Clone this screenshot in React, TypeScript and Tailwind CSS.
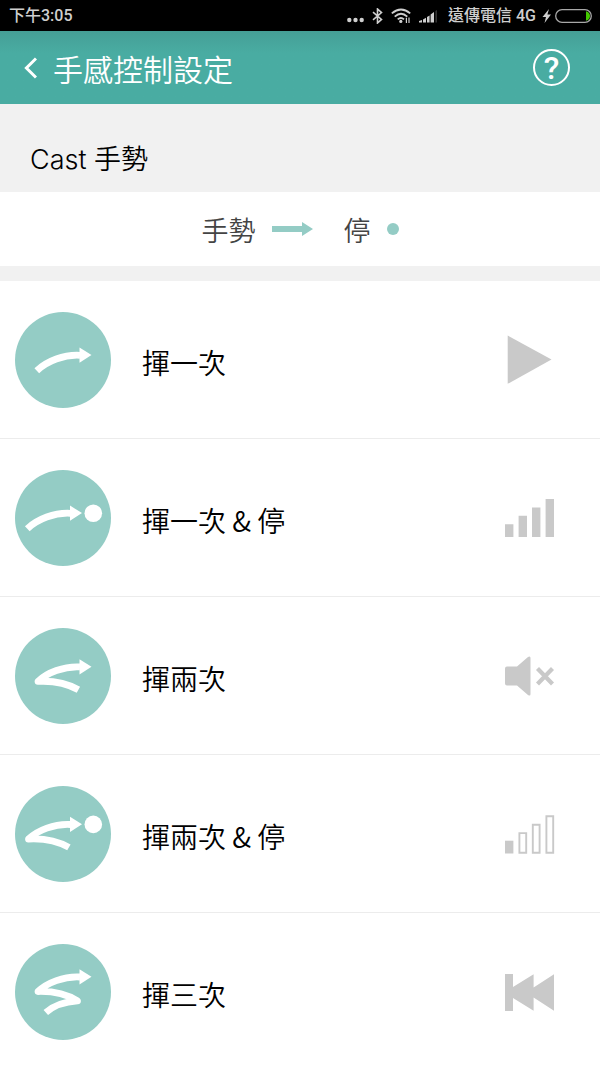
import React from 'react'

type IconName = 'play' | 'volume' | 'mute' | 'volumeLow' | 'previous'
type GestureName = 'once' | 'onceStop' | 'twice' | 'twiceStop' | 'thrice'

interface Gesture {
  name: GestureName
  label: string
  icon: IconName
}

const gestures: Gesture[] = [
  { name: 'once', label: '揮一次', icon: 'play' },
  { name: 'onceStop', label: '揮一次 & 停', icon: 'volume' },
  { name: 'twice', label: '揮兩次', icon: 'mute' },
  { name: 'twiceStop', label: '揮兩次 & 停', icon: 'volumeLow' },
  { name: 'thrice', label: '揮三次', icon: 'previous' },
]

// Swing path with an arrow head, drawn for the top stroke at y = 43
const swings = {
  once: 'M21.8 58.7C32 49 49 42.4 65 43.3',
  twice: 'M63.4 66.2C50 58.6 38 57 23 57.8C32 49 49 42.4 65 43.3',
  thrice: 'M30.8 78.8C39 71.5 50 68 62.5 67.2C52 60.6 38 57.4 23 57.8C32 49 49 42.4 65 43.3',
}

function Swing({ d, x = 0, y = 0, stop = false }: { d: string; x?: number; y?: number; stop?: boolean }) {
  return (
    <g transform={`translate(${x} ${y})`}>
      <path d={d} fill="none" stroke="#fff" strokeWidth="6.8" strokeLinejoin="round" />
      <path d="M64.5 35.6L76.5 43.1L64.5 50.8Z" fill="#fff" />
      {stop && <circle cx="87.8" cy="43.2" r="8.8" fill="#fff" />}
    </g>
  )
}

function GestureIcon({ name }: { name: GestureName }) {
  return (
    <svg viewBox="0 0 96 96" className="h-24 w-24 shrink-0" aria-hidden="true">
      <circle cx="48" cy="48" r="48" fill="#94ccc5" />
      {name === 'once' && <Swing d={swings.once} />}
      {name === 'onceStop' && <Swing d={swings.once} x={-9.5} stop />}
      {name === 'twice' && <Swing d={swings.twice} y={-4.4} />}
      {name === 'twiceStop' && <Swing d={swings.twice} x={-9.5} y={-4.8} stop />}
      {name === 'thrice' && <Swing d={swings.thrice} y={-10.3} />}
    </svg>
  )
}

function ActionIcon({ name }: { name: IconName }) {
  return (
    <svg viewBox="0 0 50 50" className="h-[50px] w-[50px] shrink-0" fill="#c9c9c9" aria-hidden="true">
      {name === 'play' && <path d="M2.7 .5L46.5 24.5L2.7 48.8Z" />}
      {name === 'volume' && (
        <path d="M0 31.2h8.4V44H0zM13.6 22.8H22V44h-8.4zM27 14.4h8.4V44H27zM40.6 6H49v38h-8.4z" />
      )}
      {name === 'mute' && (
        <>
          <path d="M2 15.5H12L23 6Q25.5 4.5 25.5 7V43Q25.5 45.5 23 44L12 34.5H2Q0 34.5 0 32.5V17.5Q0 15.5 2 15.5Z" />
          <path d="M32.5 17.5L47.5 33M47.5 17.5L32.5 33" stroke="#c9c9c9" strokeWidth="4.2" />
        </>
      )}
      {name === 'volumeLow' && (
        <>
          <path d="M0 31.7h8.4V44.5H0z" />
          <path
            d="M14.4 24.1h6.8v19.6h-6.8zM27.8 15.7h6.8v28h-6.8zM41.4 7.3h6.8v36.4h-6.8z"
            fill="none"
            stroke="#c9c9c9"
            strokeWidth="1.9"
          />
        </>
      )}
      {name === 'previous' && <path d="M0 7H8V20L28.6 7.3V20.5L49 7.3V43.7L28.6 30.5V43.7L8 31V44H0Z" />}
    </svg>
  )
}

function StatusBar() {
  return (
    <div className="flex h-[31px] items-center justify-between bg-black pr-2 pl-[9px] font-['Roboto','Noto_Sans_CJK_TC',sans-serif] text-base leading-5 font-medium text-[#cfcfcf]">
      <span>下午3:05</span>
      <div className="flex items-center">
        <svg width="17" height="16" viewBox="0 0 17 16" fill="#cfcfcf" className="mr-2" aria-hidden="true">
          <circle cx="2.3" cy="12" r="2.2" />
          <circle cx="8.5" cy="12" r="2.2" />
          <circle cx="14.7" cy="12" r="2.2" />
        </svg>
        <svg width="11" height="16" viewBox="0 0 11 16" className="mr-2" aria-hidden="true">
          <path d="M1 4.2L9.5 11.4L5.5 15V1L9.5 4.6L1 11.8" fill="none" stroke="#cfcfcf" strokeWidth="1.6" />
        </svg>
        <svg width="20" height="16" viewBox="0 0 20 16" className="mr-2" aria-hidden="true">
          <path
            d="M.8 5.4Q10-2.4 19.2 5.4M3.7 8.6Q10 3 16.3 8.6M6.7 11.4Q10 8.6 13 11.4"
            fill="none"
            stroke="#cfcfcf"
            strokeWidth="1.8"
          />
          <circle cx="9.8" cy="13.4" r="1.6" fill="#cfcfcf" />
          <path d="M15.4 15V9.8M18 9.6V15" stroke="#cfcfcf" strokeWidth="1.2" />
        </svg>
        <svg width="19" height="16" viewBox="0 0 19 16" className="mr-2.5" aria-hidden="true">
          <path d="M0 14.5V13L3 12V14.5ZM4 14.5V11.4L7 9.8V14.5ZM8 14.5V9L10.6 7.4V14.5ZM11.6 14.5V6.4L15 4V14.5Z" fill="#cfcfcf" />
          <path d="M16.4 14.5V3L18 2V14.5Z" fill="#333" />
        </svg>
        <span>遠傳電信 4G</span>
        <svg width="9" height="16" viewBox="0 0 9 16" className="mr-1 ml-1.5" aria-hidden="true">
          <path d="M7 1L.5 9H4L2.5 15L9 6.6H5.4Z" fill="#cfcfcf" />
        </svg>
        <svg width="37" height="14" viewBox="0 0 37 14" aria-hidden="true">
          <rect x=".7" y=".7" width="35.6" height="12.6" rx="6.3" fill="none" stroke="#a8a8a8" strokeWidth="1.3" />
          <path d="M31 2.2Q35 3.5 35 7Q35 10.5 31 11.8Z" fill="#43c800" />
        </svg>
      </div>
    </div>
  )
}

function Header() {
  return (
    <header className="flex h-[73px] items-center bg-[#49aca2] bg-linear-to-b from-[#459f96] to-[#49aca2] to-30% pr-[30px] pl-6 text-white">
      <button type="button" aria-label="返回" className="mr-4">
        <svg width="13" height="22" viewBox="0 0 13 22" className="block" aria-hidden="true">
          <path d="M12 1.5L2.4 11L12 20.5" fill="none" stroke="#fff" strokeWidth="3" />
        </svg>
      </button>
      <h1 className="text-[30px] leading-9 font-[350]">手感控制設定</h1>
      <button
        type="button"
        aria-label="說明"
        className="ml-auto flex h-[37px] w-[37px] items-center justify-center rounded-full border-2 border-white font-['Roboto',sans-serif] text-[32px] leading-8 font-medium"
      >
        ?
      </button>
    </header>
  )
}

export default function App() {
  return (
    <div className="bg-white font-['Noto_Sans_CJK_TC',sans-serif] text-black">
      <StatusBar />
      <Header />

      <main>
        <h2 className="bg-[#f1f1f1] px-[30px] pt-9 pb-3 font-['Inter','Noto_Sans_CJK_TC',sans-serif] text-[27px] leading-10 font-[350]">
          Cast 手勢
        </h2>

        {/* Legend */}
        <div className="flex h-[74px] items-center justify-center text-[27px] leading-10 font-[350] text-[#444]">
          <span className="pt-0.5">手勢</span>
          <svg width="41" height="14" viewBox="0 0 41 14" fill="#94ccc5" className="mr-[31px] ml-4" aria-hidden="true">
            <path d="M0 4H30V0L41 7L30 14V10H0Z" />
          </svg>
          <span className="pt-0.5">停</span>
          <span className="ml-4 h-3 w-3 rounded-full bg-[#94ccc5]" />
        </div>

        <ul className="border-t-[15px] border-[#f1f1f1]">
          {gestures.map(gesture => (
            <li key={gesture.name} className="border-b border-[#ececec] last:border-b-0">
              <button type="button" className="flex h-[157px] w-full items-center pr-[45px] pl-[15px] text-left">
                <GestureIcon name={gesture.name} />
                <span className="ml-[31px] flex-1 pt-1 text-[28px] leading-10 font-[350]">{gesture.label}</span>
                <ActionIcon name={gesture.icon} />
              </button>
            </li>
          ))}
        </ul>
      </main>
    </div>
  )
}
